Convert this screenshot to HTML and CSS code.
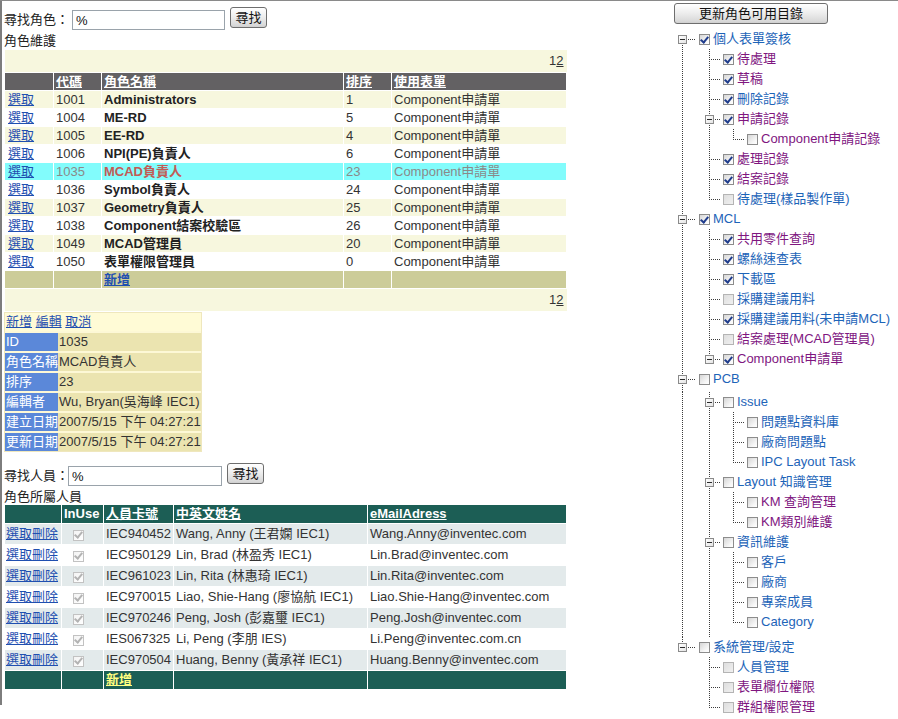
FILE: index.html
```html
<!DOCTYPE html>
<html>
<head>
<meta charset="utf-8">
<title>角色維護</title>
<link rel="stylesheet" href="styles.css">
</head>
<body>
<div class="page">
  <div class="left">
    <div class="search s1">
      <span class="lbl">尋找角色：</span><input class="box b1" type="text" value="%"><button class="btn">尋找</button>
    </div>
    <div class="cap">角色維護</div>
    <table class="gv1">
      <colgroup><col class="w49"><col class="w48"><col class="w242"><col class="w48"><col class="w175"></colgroup>
      <tr class="pager"><td colspan="5"><span>1</span><a class="pg">2</a></td></tr>
      <tr class="hd"><th></th><th><a>代碼</a></th><th><a>角色名稱</a></th><th><a>排序</a></th><th><a>使用表單</a></th></tr>
      <tr class="odd"><td class="f"><a>選取</a></td><td>1001</td><td class="nm">Administrators</td><td>1</td><td>Component申請單</td></tr>
      <tr><td class="f"><a>選取</a></td><td>1004</td><td class="nm">ME-RD</td><td>5</td><td>Component申請單</td></tr>
      <tr class="odd"><td class="f"><a>選取</a></td><td>1005</td><td class="nm">EE-RD</td><td>4</td><td>Component申請單</td></tr>
      <tr><td class="f"><a>選取</a></td><td>1006</td><td class="nm">NPI(PE)負責人</td><td>6</td><td>Component申請單</td></tr>
      <tr class="sel"><td class="f"><a>選取</a></td><td>1035</td><td class="nm">MCAD負責人</td><td>23</td><td>Component申請單</td></tr>
      <tr><td class="f"><a>選取</a></td><td>1036</td><td class="nm">Symbol負責人</td><td>24</td><td>Component申請單</td></tr>
      <tr class="odd"><td class="f"><a>選取</a></td><td>1037</td><td class="nm">Geometry負責人</td><td>25</td><td>Component申請單</td></tr>
      <tr><td class="f"><a>選取</a></td><td>1038</td><td class="nm">Component結案校驗區</td><td>26</td><td>Component申請單</td></tr>
      <tr class="odd"><td class="f"><a>選取</a></td><td>1049</td><td class="nm">MCAD管理員</td><td>20</td><td>Component申請單</td></tr>
      <tr><td class="f"><a>選取</a></td><td>1050</td><td class="nm">表單權限管理員</td><td>0</td><td>Component申請單</td></tr>
      <tr class="ft"><td></td><td></td><td><a>新增</a></td><td></td><td></td></tr>
      <tr class="pager"><td colspan="5"><span>1</span><a class="pg">2</a></td></tr>
    </table>

    <table class="dv">
      <tr><td colspan="2" class="cmd"><a>新增</a> <a>編輯</a> <a>取消</a></td></tr>
      <tr><th>ID</th><td>1035</td></tr>
      <tr><th>角色名稱</th><td>MCAD負責人</td></tr>
      <tr><th>排序</th><td>23</td></tr>
      <tr><th>編輯者</th><td>Wu, Bryan(吳海峰 IEC1)</td></tr>
      <tr><th>建立日期</th><td>2007/5/15 下午 04:27:21</td></tr>
      <tr><th>更新日期</th><td>2007/5/15 下午 04:27:21</td></tr>
    </table>

    <div class="search s2">
      <span class="lbl">尋找人員：</span><input class="box b2" type="text" value="%"><button class="btn">尋找</button>
    </div>
    <div class="cap">角色所屬人員</div>
    <table class="gv2">
      <colgroup><col class="w57"><col class="w42"><col class="w70"><col class="w194"><col class="w199"></colgroup>
      <tr class="hd"><th></th><th>InUse</th><th><a>人員卡號</a></th><th><a>中英文姓名</a></th><th><a>eMailAdress</a></th></tr>
      <tr class="gr"><td class="f"><a>選取</a><a>刪除</a></td><td><span class="cb dis on"></span></td><td>IEC940452</td><td>Wang, Anny (王君嫻 IEC1)</td><td>Wang.Anny@inventec.com</td></tr>
      <tr><td class="f"><a>選取</a><a>刪除</a></td><td><span class="cb dis on"></span></td><td>IEC950129</td><td>Lin, Brad (林盈秀 IEC1)</td><td>Lin.Brad@inventec.com</td></tr>
      <tr class="gr"><td class="f"><a>選取</a><a>刪除</a></td><td><span class="cb dis on"></span></td><td>IEC961023</td><td>Lin, Rita (林惠琦 IEC1)</td><td>Lin.Rita@inventec.com</td></tr>
      <tr><td class="f"><a>選取</a><a>刪除</a></td><td><span class="cb dis on"></span></td><td>IEC970015</td><td>Liao, Shie-Hang (廖協航 IEC1)</td><td>Liao.Shie-Hang@inventec.com</td></tr>
      <tr class="gr"><td class="f"><a>選取</a><a>刪除</a></td><td><span class="cb dis on"></span></td><td>IEC970246</td><td>Peng, Josh (彭嘉璽 IEC1)</td><td>Peng.Josh@inventec.com</td></tr>
      <tr><td class="f"><a>選取</a><a>刪除</a></td><td><span class="cb dis on"></span></td><td>IES067325</td><td>Li, Peng (李朋 IES)</td><td>Li.Peng@inventec.com.cn</td></tr>
      <tr class="gr"><td class="f"><a>選取</a><a>刪除</a></td><td><span class="cb dis on"></span></td><td>IEC970504</td><td>Huang, Benny (黃承祥 IEC1)</td><td>Huang.Benny@inventec.com</td></tr>
      <tr class="ft"><td></td><td></td><td><a>新增</a></td><td></td><td></td></tr>
    </table>
  </div>

  <div class="right">
    <button class="btn big">更新角色可用目錄</button>
    <div class="tree">
      <div class="r"><span class="c0 Br"><span class="x"></span></span><span class="cb on"></span><span class="t b">個人表單簽核</span></div>
      <div class="r"><span class="c0 I"></span><span class="c T"></span><span class="cb on"></span><span class="t p">待處理</span></div>
      <div class="r"><span class="c0 I"></span><span class="c T"></span><span class="cb on"></span><span class="t p">草稿</span></div>
      <div class="r"><span class="c0 I"></span><span class="c T"></span><span class="cb on"></span><span class="t b">刪除記錄</span></div>
      <div class="r"><span class="c0 I"></span><span class="c Bt"><span class="x"></span></span><span class="cb on"></span><span class="t p">申請記錄</span></div>
      <div class="r"><span class="c0 I"></span><span class="c I"></span><span class="c L"></span><span class="cb"></span><span class="t p">Component申請記錄</span></div>
      <div class="r"><span class="c0 I"></span><span class="c T"></span><span class="cb on"></span><span class="t p">處理記錄</span></div>
      <div class="r"><span class="c0 I"></span><span class="c T"></span><span class="cb on"></span><span class="t p">結案記錄</span></div>
      <div class="r"><span class="c0 I"></span><span class="c L"></span><span class="cb dim"></span><span class="t b">待處理(樣品製作單)</span></div>
      <div class="r"><span class="c0 Bt"><span class="x"></span></span><span class="cb on"></span><span class="t b">MCL</span></div>
      <div class="r"><span class="c0 I"></span><span class="c T"></span><span class="cb on"></span><span class="t p">共用零件查詢</span></div>
      <div class="r"><span class="c0 I"></span><span class="c T"></span><span class="cb on"></span><span class="t b">螺絲速查表</span></div>
      <div class="r"><span class="c0 I"></span><span class="c T"></span><span class="cb on"></span><span class="t b">下載區</span></div>
      <div class="r"><span class="c0 I"></span><span class="c T"></span><span class="cb dim"></span><span class="t b">採購建議用料</span></div>
      <div class="r"><span class="c0 I"></span><span class="c T"></span><span class="cb on"></span><span class="t b">採購建議用料(未申請MCL)</span></div>
      <div class="r"><span class="c0 I"></span><span class="c T"></span><span class="cb dim"></span><span class="t p">結案處理(MCAD管理員)</span></div>
      <div class="r"><span class="c0 I"></span><span class="c Bl"><span class="x"></span></span><span class="cb on"></span><span class="t p">Component申請單</span></div>
      <div class="r g3"><span class="c0 Bt"><span class="x"></span></span><span class="cb"></span><span class="t b">PCB</span></div>
      <div class="r"><span class="c0 I"></span><span class="c Bt"><span class="x"></span></span><span class="cb"></span><span class="t b">Issue</span></div>
      <div class="r"><span class="c0 I"></span><span class="c I"></span><span class="c T"></span><span class="cb"></span><span class="t b">問題點資料庫</span></div>
      <div class="r"><span class="c0 I"></span><span class="c I"></span><span class="c T"></span><span class="cb"></span><span class="t b">廠商問題點</span></div>
      <div class="r"><span class="c0 I"></span><span class="c I"></span><span class="c L"></span><span class="cb"></span><span class="t b">IPC Layout Task</span></div>
      <div class="r"><span class="c0 I"></span><span class="c Bt"><span class="x"></span></span><span class="cb"></span><span class="t b">Layout 知識管理</span></div>
      <div class="r"><span class="c0 I"></span><span class="c I"></span><span class="c T"></span><span class="cb"></span><span class="t p">KM 查詢管理</span></div>
      <div class="r"><span class="c0 I"></span><span class="c I"></span><span class="c L"></span><span class="cb"></span><span class="t p">KM類別維護</span></div>
      <div class="r"><span class="c0 I"></span><span class="c Bt"><span class="x"></span></span><span class="cb"></span><span class="t b">資訊維護</span></div>
      <div class="r"><span class="c0 I"></span><span class="c I"></span><span class="c T"></span><span class="cb"></span><span class="t b">客戶</span></div>
      <div class="r"><span class="c0 I"></span><span class="c I"></span><span class="c T"></span><span class="cb"></span><span class="t b">廠商</span></div>
      <div class="r"><span class="c0 I"></span><span class="c I"></span><span class="c T"></span><span class="cb"></span><span class="t b">專案成員</span></div>
      <div class="r g5"><span class="c0 I"></span><span class="c I"></span><span class="c L"></span><span class="cb"></span><span class="t b">Category</span></div>
      <div class="r"><span class="c0 Bl"><span class="x"></span></span><span class="cb"></span><span class="t b">系統管理/設定</span></div>
      <div class="r"><span class="c0"></span><span class="c T"></span><span class="cb dim"></span><span class="t b">人員管理</span></div>
      <div class="r"><span class="c0"></span><span class="c T"></span><span class="cb dim"></span><span class="t p">表單欄位權限</span></div>
      <div class="r"><span class="c0"></span><span class="c L"></span><span class="cb dim"></span><span class="t p">群組權限管理</span></div>
    </div>
  </div>
</div>
</body>
</html>
```
FILE: styles.css
```css
body {
  margin: 0;
  font-family: "Liberation Sans", Arial, "Noto Sans CJK TC", sans-serif;
  font-size: 13px;
  color: #222;
  background: #fff;
}
a { color: #1f4fb0; text-decoration: underline; cursor: pointer; }

.page {
  display: flex;
  align-items: flex-start;
  border-top: 1px solid #8a8a8a;
  --v: repeating-linear-gradient(to bottom, #3c3c3c 0 1px, transparent 1px 2px);
  --h: repeating-linear-gradient(to right, #3c3c3c 0 1px, transparent 1px 2px);
}
.left {
  flex: none;
  width: 566px;
  height: 704px;
  border-left: 2px solid #7d7d7d;
  padding-left: 2px;
}
.right { flex: none; margin-left: 104px; }

/* search rows */
.search { display: flex; align-items: flex-start; height: 24px; }
.s1 { margin-top: 6px; }
.s2 { margin-top: 11px; }
.lbl { margin-top: 3px; line-height: 19px; white-space: nowrap; }
.box {
  box-sizing: border-box;
  width: 153px;
  height: 20px;
  margin-top: 3px;
  border: 1px solid #9aa3ab;
  padding: 0 3px;
  font: 13px "Liberation Sans", Arial, sans-serif;
  color: #111;
  background: #fff;
}
.b1 { margin-left: 3px; }
.b2 { margin-left: -1px; width: 154px; }
.btn {
  box-sizing: border-box;
  width: 37px;
  height: 21px;
  margin-left: 5px;
  padding: 0;
  border: 1px solid #6e6e6e;
  border-radius: 3px;
  background: linear-gradient(#ffffff, #eeeeee 45%, #d9d9d9 90%, #cfcfcf);
  font-family: "Liberation Sans", Arial, "Noto Sans CJK TC", sans-serif;
  font-size: 13px;
  color: #111;
  line-height: 17px;
}
.cap { line-height: 16px; margin-top: 2px; white-space: nowrap; }

/* role grid */
.gv1, .gv2 {
  table-layout: fixed;
  width: 562px;
  border-collapse: collapse;
}
.gv1 { margin-top: 1px; }
.w49 { width: 49px; } .w48 { width: 48px; } .w242 { width: 242px; } .w175 { width: 175px; }
.w57 { width: 57px; } .w42 { width: 42px; } .w70 { width: 70px; } .w194 { width: 194px; } .w199 { width: 199px; }

.gv1 td, .gv1 th {
  border: 1px solid #fff;
  padding: 0 0 0 2px;
  height: 17px;
  line-height: 16px;
  text-align: left;
  white-space: nowrap;
  overflow: hidden;
  color: #333;
}
.gv1 td.f { padding-left: 3px; }
.gv1 tr.pager td {
  background: #f7f7de;
  height: 21px;
  line-height: 22px;
  text-align: right;
  padding-right: 3px;
  border: 0;
}
.pg { color: #333; }
.gv1 tr.hd th { background: #636163; font-weight: bold; }
.gv1 tr.hd th a { color: #fff; }
.gv1 tr.odd td { background: #f7f7de; }
.gv1 td.nm { font-weight: bold; color: #222; }
.gv1 tr.sel td { background: #82fcfc; color: #8a8a8a; }
.gv1 tr.sel td.nm { color: #c25a55; }
.gv1 tr.ft td { background: #cccc99; font-weight: bold; }

/* details view */
.dv {
  margin-top: 1px;
  width: 198px;
  border-collapse: separate;
  border-spacing: 0;
  background: #fffbd6;
  border: 1px solid #efe7bd;
}
.dv td, .dv th {
  height: 18px;
  padding: 0 0 0 1px;
  line-height: 18px;
  border-top: 2px solid #fdf8d6;
  white-space: nowrap;
  text-align: left;
  font-weight: normal;
}
.dv th { width: 52px; background: #5b88d9; color: #fff; }
.dv td { background: #ebe4b0; color: #333; }
.dv td.cmd { background: #fffbd6; border-top: 0; padding-left: 1px; height: 17px; }

/* people grid */
.gv2 { margin-top: 0; }
.gv2 td, .gv2 th {
  border: 1px solid #fff;
  padding: 0 0 0 2px;
  height: 20px;
  line-height: 18px;
  text-align: left;
  white-space: nowrap;
  overflow: hidden;
  color: #333;
}
.gv2 td.f { padding-left: 1px; }
.gv2 tr.hd th { background: #1c5e55; color: #fff; font-weight: bold; height: 18px; border-top: 0; }
.gv2 tr.hd th a { color: #fff; }
.gv2 tr.gr td { background: #e3eaeb; }
.gv2 tr.ft td { background: #1c5e55; height: 18px; font-weight: bold; }
.gv2 tr.ft a { color: #ffff80; }
.gv2 .cb { margin: 0 0 0 9px; vertical-align: -1px; }

/* checkboxes */
.cb {
  flex: none;
  box-sizing: border-box;
  display: inline-flex;
  align-items: center;
  justify-content: center;
  width: 11px;
  height: 11px;
  border: 1px solid #8c8c8c;
  background: linear-gradient(135deg, #d6d6d6, #f7f7f7 70%, #ffffff);
}
.cb.on::after {
  content: "";
  width: 3px;
  height: 6px;
  border: solid #1f3c8c;
  border-width: 0 2px 2px 0;
  transform: translate(0, -1px) rotate(40deg);
}
.cb.dim { border-color: #b4b4b4; background: linear-gradient(135deg, #dedede, #f0f0f0); }
.cb.dis { border-color: #c2c2c2; background: linear-gradient(135deg, #f3f3f3, #ffffff); }
.cb.dis.on::after { border-color: #b3b3b3; }

/* tree */
.btn.big {
  width: 154px;
  height: 21px;
  margin: 2px 0 0 0;
  font-size: 13px;
}
.tree { margin-top: 5px; }
.r { display: flex; height: 20px; }
.r.g3 { height: 23px; }
.r.g5 { height: 25px; }
.c0, .c { flex: none; display: flex; align-items: flex-start; }
.c0 { width: 22px; --x: 8px; }
.c { width: 24px; --x: 13px; }
.I { background: var(--v) var(--x) 0 / 1px 100% no-repeat; }
.T, .Bt {
  background:
    var(--v) var(--x) 0 / 1px 100% no-repeat,
    var(--h) var(--x) 10px / calc(100% - var(--x)) 1px no-repeat;
}
.L, .Bl {
  background:
    var(--v) var(--x) 0 / 1px 11px no-repeat,
    var(--h) var(--x) 10px / calc(100% - var(--x)) 1px no-repeat;
}
.Br {
  background:
    var(--v) var(--x) 10px / 1px calc(100% - 10px) no-repeat,
    var(--h) var(--x) 10px / calc(100% - var(--x)) 1px no-repeat;
}
.x {
  box-sizing: border-box;
  display: flex;
  align-items: center;
  justify-content: center;
  width: 9px;
  height: 9px;
  margin-top: 6px;
  margin-left: calc(var(--x) - 4px);
  border: 1px solid #8a8a8a;
  background: linear-gradient(135deg, #ffffff, #e4e4e4);
}
.x::after { content: ""; width: 5px; height: 1px; background: #2a2a2a; }
.r .cb { margin: 5px 0 0 3px; }
.t {
  margin-left: 3px;
  line-height: 20px;
  white-space: nowrap;
  font-size: 13px;
}
.t.b { color: #1d64b8; }
.t.p { color: #80167f; }
```
